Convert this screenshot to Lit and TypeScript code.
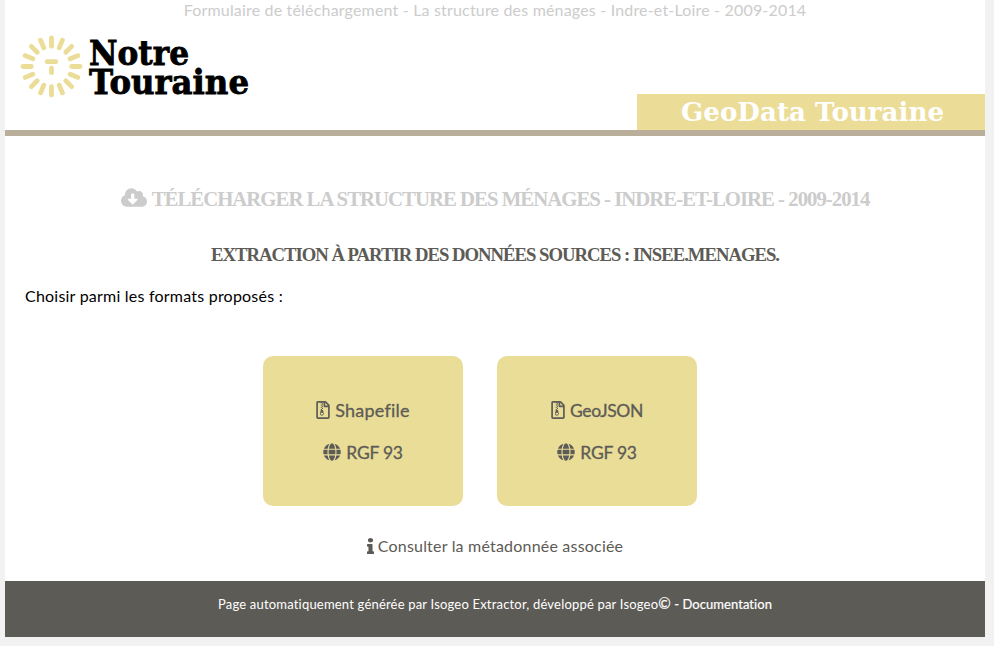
import { LitElement, html, svg, css } from "lit";
import { customElement } from "lit/decorators.js";

const cloud = html`<svg class="cloud" viewBox="0 0 640 512" preserveAspectRatio="none"><path d="M537.600 226.600c4.100-10.700 6.400-22.400 6.400-34.600 0-53-43-96-96-96-19.700 0-38.100 6-53.300 16.200C367 64.200 315.300 32 256 32c-88.400 0-160 71.600-160 160 0 2.700.100 5.400.200 8.100C40.200 219.800 0 273.200 0 336c0 79.500 64.500 144 144 144h368c70.700 0 128-57.300 128-128 0-61.900-44-113.600-102.400-125.400zm-132.900 88.700L299.300 420.700c-6.200 6.200-16.400 6.200-22.600 0L171.300 315.300c-10.100-10.100-2.900-27.300 11.300-27.300H248V176c0-8.800 7.200-16 16-16h48c8.800 0 16 7.200 16 16v112h65.400c14.200 0 21.400 17.200 11.300 27.300z"/></svg>`;

const archive = html`<svg class="archive" viewBox="0 0 384 512"><path d="M128.300 160v32h32v-32zm64-96h-32v32h32zm-64 32v32h32V96zm64 32h-32v32h32zm177.600-30.100L286 14C277 5 264.800-.100 252.100-.100H48C21.500 0 0 21.500 0 48v416c0 26.500 21.500 48 48 48h288c26.500 0 48-21.500 48-48V131.900c0-12.700-5.100-25-14.100-34zM256 51.900l76.100 76.100H256zM336 464H48V48h79.700v16h32V48H208v104c0 13.300 10.700 24 24 24h104zM194.200 265.700c-1.100-5.600-6-9.700-11.800-9.700h-22.100v-32h-32v32l-19.700 97.100C102 385.600 126.800 416 160 416c33.100 0 57.900-30.200 51.500-62.600zm-33.900 124.400c-17.900 0-32.400-12.100-32.400-27s14.500-27 32.400-27 32.400 12.100 32.400 27-14.500 27-32.400 27zm32-198.100h-32v32h32z"/></svg>`;

const globe = html`<svg class="globe" viewBox="0 0 496 512"><path d="M336.500 160C322 70.700 287.800 8 248 8s-74 62.700-88.500 152h177zM152 256c0 22.200 1.200 43.500 3.300 64h185.300c2.100-20.500 3.300-41.800 3.300-64s-1.200-43.500-3.300-64H155.300c-2.100 20.500-3.300 41.800-3.300 64zm324.700-96c-28.600-67.900-86.500-120.400-158-141.600 24.400 33.800 41.200 84.700 50 141.600h108zM177.200 18.400C105.800 39.600 47.800 92.100 19.300 160h108c8.700-56.900 25.500-107.800 49.900-141.600zM487.400 192H372.700c2.100 21 3.300 42.500 3.300 64s-1.200 43-3.300 64h114.600c5.500-20.500 8.600-41.800 8.600-64s-3.100-43.500-8.500-64zM120 256c0-21.500 1.200-43 3.300-64H8.600C3.200 212.500 0 233.800 0 256s3.200 43.500 8.600 64h114.600c-2-21-3.200-42.500-3.200-64zm39.500 96c14.500 89.300 48.700 152 88.500 152s74-62.700 88.500-152h-177zm159.300 141.600c71.400-21.200 129.400-73.700 158-141.600h-108c-8.800 56.900-25.600 107.800-50 141.600zM19.300 352c28.600 67.900 86.500 120.400 158 141.600-24.400-33.800-41.200-84.700-50-141.600h-108z"/></svg>`;

const info = html`<svg class="info" viewBox="0 0 192 512" preserveAspectRatio="none"><path d="M20 424.200h20V279.800H20c-11 0-20-9-20-20V212c0-11 9-20 20-20h112c11 0 20 9 20 20v212.200h20c11 0 20 9 20 20V492c0 11-9 20-20 20H20c-11 0-20-9-20-20v-47.800c0-11 9-20 20-20zM96 0C56.200 0 24 32.200 24 72s32.200 72 72 72 72-32.200 72-72S135.800 0 96 0z"/></svg>`;

const rays = Array.from({ length: 16 }, (_, i) => i * 22.5);

@customElement("app-root")
export class AppRoot extends LitElement {
  static styles = css`
    :host { display: block; height: 646px; overflow: hidden; background: #f2f2f2; color: #000; font: 16px/20px Lato, "Open Sans", sans-serif; font-variant-ligatures: none; }
    .page { width: 980px; height: 637px; margin-left: 5px; background: #fff; display: flex; flex-direction: column; align-items: center; }
    svg { display: block; flex: none; fill: currentColor; }
    span { white-space: nowrap; }
    .crumb { height: 22px; color: #ccc; letter-spacing: 0.18px; }
    .banner { width: 980px; height: 108px; border-bottom: 6px solid #b8ae9a; display: flex; justify-content: space-between; align-items: flex-end; }
    .logo { width: 260px; height: 92px; margin: 0 0 16px 5px; }
    .logo line { stroke: #ebdd98; stroke-width: 4.8; stroke-linecap: round; }
    .logo text { font: bold 33px "DejaVu Serif", serif; fill: #000; stroke: #000; stroke-width: 0.8; }
    .brand { width: 348px; height: 36px; background: #ebdd98; }
    .brand text { font: bold 26.5px "DejaVu Serif", serif; fill: #fff; }
    h1, h2 { margin: 0; font-family: "Liberation Serif", serif; font-weight: bold; text-transform: uppercase; display: flex; letter-spacing: -1px; }
    h1 { margin-top: 51px; height: 24px; font-size: 20.8px; line-height: 24px; color: #ccc; gap: 5px; }
    .cloud { width: 26px; height: 21px; }
    h2 { margin-top: 34px; height: 20px; font-size: 18.72px; line-height: 20px; color: #5d5b55; }
    .intro { margin: 21px 0 0 20px; align-self: flex-start; letter-spacing: 0.22px; }
    .cards { margin-top: 50px; margin-right: 30px; display: flex; gap: 34px; }
    .card { width: 200px; height: 150px; box-sizing: border-box; padding-top: 43px; border-radius: 10px; background: #eadd98; color: #5d5b55; display: flex; flex-direction: column; align-items: center; gap: 18px; font-size: 18px; line-height: 24px; -webkit-text-stroke: 0.3px #5d5b55; }
    .row { display: flex; align-items: center; gap: 5px; height: 24px; }
    .row span { margin-top: -2px; }
    .shape { letter-spacing: 0.25px; }
    .row .geo { font-size: 17.5px; letter-spacing: -0.35px; margin-top: 0; }
    .row .rgf { font-size: 17.5px; letter-spacing: -0.25px; margin-top: 0; }
    .archive { width: 14px; height: 18px; margin-top: -2px; }
    .globe { width: 18px; height: 18px; margin-top: -2px; }
    .meta { margin-top: 30px; height: 20px; color: #5d5b55; display: flex; gap: 4px; align-items: center; letter-spacing: 0.2px; }
    .info { width: 7px; height: 16px; }
    .footer { margin-top: auto; width: 980px; height: 56px; background: #5d5b55; color: #fff; display: flex; justify-content: center; align-items: baseline; font-size: 13px; line-height: 16px; padding-top: 15px; box-sizing: border-box; }
    .footer span { white-space: pre; }
    .credit { letter-spacing: 0.19px; }
    .doc { letter-spacing: 0.06px; -webkit-text-stroke: 0.2px #fff; }
    .copy { font-size: 15px; line-height: 1px; }
  `;

  card(name: string, cls: string) {
    return html`<div class="card">
      <div class="row">${archive}<span class=${cls}>${name}</span></div>
      <div class="row">${globe}<span class="rgf">RGF 93</span></div>
    </div>`;
  }

  render() {
    return html`<div class="page">
      <div class="crumb"><span>Formulaire de téléchargement - La structure des ménages - Indre-et-Loire - 2009-2014</span></div>
      <div class="banner">
        <svg class="logo" viewBox="10 22 260 92">
          ${rays.map((a) => svg`<line x1="51.500" y1="38" x2="51.500" y2="46.300" transform="rotate(${a} 51.500 66.500)"/>`)}
          <line x1="47.100" y1="61.700" x2="55.900" y2="61.700"/>
          <line x1="51.500" y1="68.200" x2="51.500" y2="72.700"/>
          <text x="89" y="65" textLength="100" lengthAdjust="spacingAndGlyphs">Notre</text>
          <text x="89" y="94" textLength="160" lengthAdjust="spacingAndGlyphs">Touraine</text>
        </svg>
        <svg class="brand" viewBox="0 0 348 36"><text x="44" y="27" textLength="263" lengthAdjust="spacingAndGlyphs">GeoData Touraine</text></svg>
      </div>
      <h1>${cloud}<span>Télécharger La structure des ménages - Indre-et-Loire - 2009-2014</span></h1>
      <h2><span>Extraction à partir des données sources : insee.menages.</span></h2>
      <div class="intro"><span>Choisir parmi les formats proposés :</span></div>
      <div class="cards">${this.card("Shapefile", "shape")}${this.card("GeoJSON", "geo")}</div>
      <div class="meta">${info}<span>Consulter la métadonnée associée</span></div>
      <div class="footer"><span class="credit">Page automatiquement générée par Isogeo Extractor, développé par Isogeo</span><span class="doc"><span class="copy">©</span> - Documentation</span></div>
    </div>`;
  }
}
